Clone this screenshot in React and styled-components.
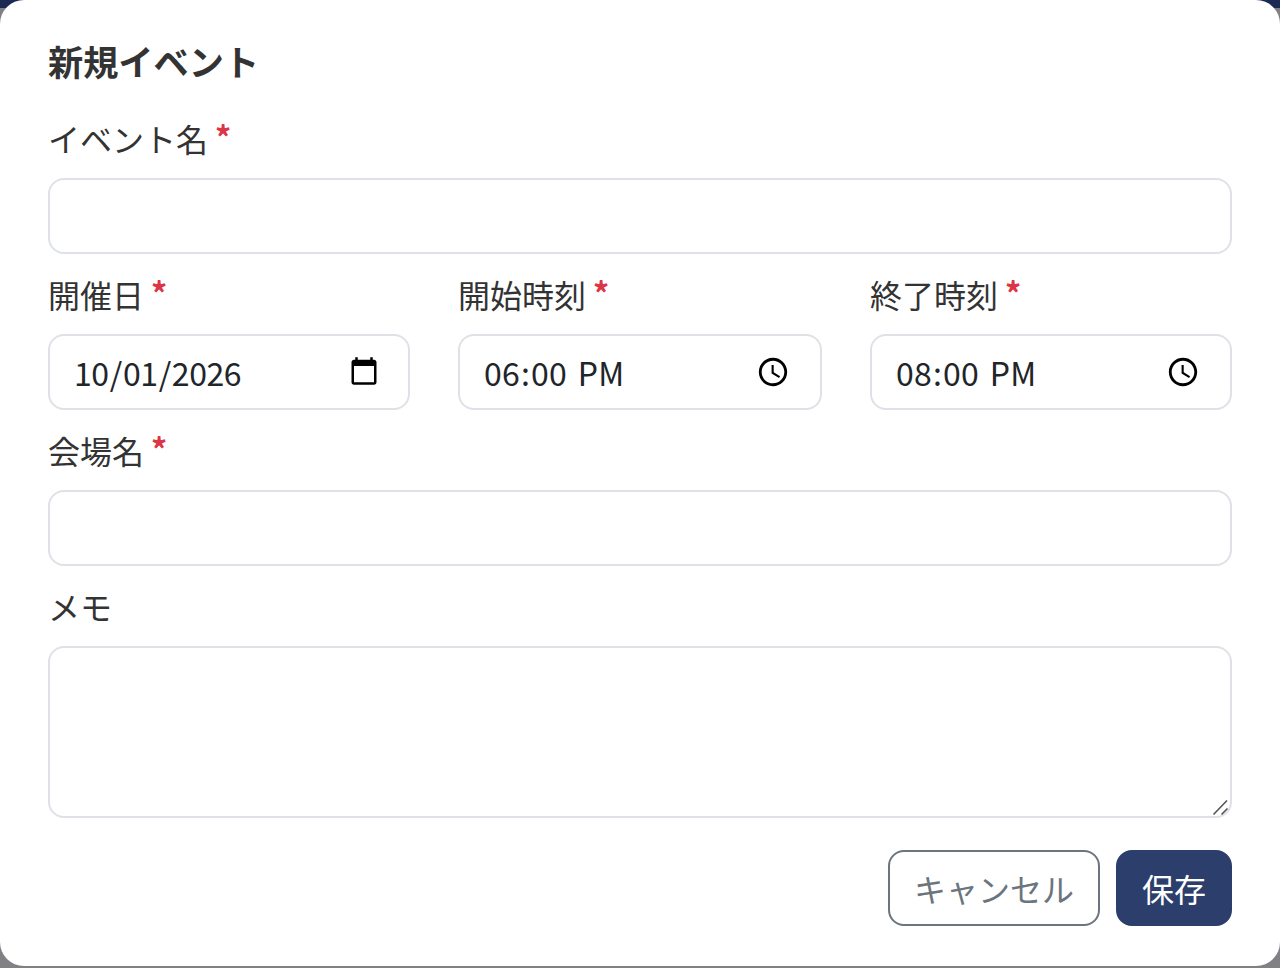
import React from "react";
import styled, { createGlobalStyle } from "styled-components";

const Global = createGlobalStyle`
  html, body { margin: 0; padding: 0; background: #808085; }
  * { box-sizing: border-box; }
`;

const fontStack = `"Noto Sans CJK JP", "Noto Sans", sans-serif`;

const Page = styled.div`
  position: relative;
  width: 1280px;
  height: 968px;
  overflow: hidden;
  background: #808085;
  font-family: ${fontStack};
`;

const HeaderBehind = styled.div`
  height: 8px;
  background: #1b2a52;
`;

const Modal = styled.form`
  position: absolute;
  inset: 0 0 2px 0;
  background: #fff;
  border-radius: 24px;
  padding: 48px;
  color: #333;
`;

const Title = styled.h2`
  margin: 0 0 40px;
  font-size: 35.2px;
  line-height: 26px;
  font-weight: 700;
  color: #333;
`;

const Group = styled.div`
  margin-bottom: 16px;
`;

const Label = styled.label`
  display: block;
  font-size: 32px;
  line-height: 48px;
  margin-bottom: 16px;
  color: #333;
`;

const Req = styled.span`
  color: #dc3545;
  margin-left: 7px;
  font-weight: 700;
  line-height: 1;
  vertical-align: 2px;
`;

const fieldStyles = `
  display: block;
  width: 100%;
  border: 2px solid #dee2e6;
  border-radius: 16px;
  background: #fff;
  font-family: ${fontStack};
  font-size: 32px;
  color: #212529;
  outline: none;
`;

const Input = styled.input`
  ${fieldStyles}
  height: 76px;
  padding: 0 24px;
`;

const DateInput = styled(Input)`
  padding: 0 26px 0 23px;
  letter-spacing: -0.4px;
`;

const TimeInput = styled(Input)`
  padding: 0 27px 0 23px;
  letter-spacing: 0.2px;

  &::-webkit-datetime-edit-ampm-field {
    margin-left: 5px;
  }
`;

const TextAreaWrap = styled.div`
  position: relative;
`;

const TextArea = styled.textarea`
  ${fieldStyles}
  height: 172px;
  padding: 12px 24px;
  resize: vertical;

  &::-webkit-resizer {
    background: transparent;
  }
`;

const Grip = styled.svg`
  position: absolute;
  right: 2px;
  bottom: 2px;
  width: 18px;
  height: 18px;
  pointer-events: none;
`;

const Row = styled.div`
  display: grid;
  grid-template-columns: 362px 364px 362px;
  gap: 48px;
`;

const Actions = styled.div`
  display: flex;
  justify-content: flex-end;
  gap: 16px;
  margin-top: 32px;
`;

const Button = styled.button`
  height: 76px;
  padding: 0 24px;
  font-family: ${fontStack};
  font-size: 32px;
  border-radius: 16px;
  border: 2px solid ${(p) => (p.$primary ? "#2c3e6b" : "#6c757d")};
  background: ${(p) => (p.$primary ? "#2c3e6b" : "#fff")};
  color: ${(p) => (p.$primary ? "#fff" : "#6c757d")};
`;

export default function App() {
  return (
    <Page>
      <Global />
      <HeaderBehind />
      <Modal onSubmit={(e) => e.preventDefault()}>
        <Title>新規イベント</Title>
        <Group>
          <Label>イベント名<Req>*</Req></Label>
          <Input type="text" />
        </Group>
        <Row>
          <Group>
            <Label>開催日<Req>*</Req></Label>
            <DateInput type="date" defaultValue="2026-10-01" />
          </Group>
          <Group>
            <Label>開始時刻<Req>*</Req></Label>
            <TimeInput type="time" defaultValue="18:00" />
          </Group>
          <Group>
            <Label>終了時刻<Req>*</Req></Label>
            <TimeInput type="time" defaultValue="20:00" />
          </Group>
        </Row>
        <Group>
          <Label>会場名<Req>*</Req></Label>
          <Input type="text" />
        </Group>
        <Group>
          <Label>メモ</Label>
          <TextAreaWrap>
            <TextArea />
            <Grip viewBox="0 0 18 18" aria-hidden="true">
              <path d="M1.5 16.5 L15 2.5 M9.5 16.5 L15.5 10.5" stroke="#555" strokeWidth="1.6" fill="none" />
            </Grip>
          </TextAreaWrap>
        </Group>
        <Actions>
          <Button type="button">キャンセル</Button>
          <Button type="submit" $primary>保存</Button>
        </Actions>
      </Modal>
    </Page>
  );
}
